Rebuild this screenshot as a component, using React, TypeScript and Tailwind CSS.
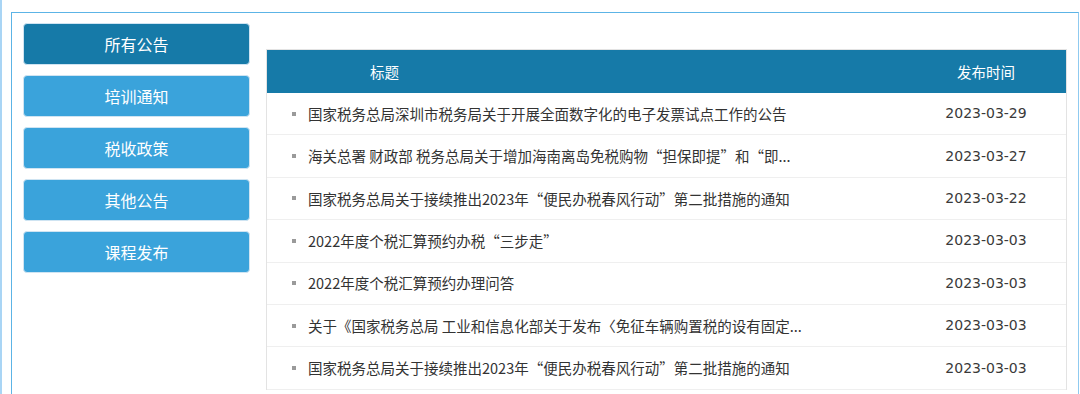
import { useState } from 'react';

const categories = ['所有公告', '培训通知', '税收政策', '其他公告', '课程发布'];

const notices = [
  { title: '国家税务总局深圳市税务局关于开展全面数字化的电子发票试点工作的公告', date: '2023-03-29' },
  { title: '海关总署 财政部 税务总局关于增加海南离岛免税购物“担保即提”和“即...', date: '2023-03-27' },
  { title: '国家税务总局关于接续推出2023年“便民办税春风行动”第二批措施的通知', date: '2023-03-22' },
  { title: '2022年度个税汇算预约办税“三步走”', date: '2023-03-03' },
  { title: '2022年度个税汇算预约办理问答', date: '2023-03-03' },
  { title: '关于《国家税务总局 工业和信息化部关于发布〈免征车辆购置税的设有固定...', date: '2023-03-03' },
  { title: '国家税务总局关于接续推出2023年“便民办税春风行动”第二批措施的通知', date: '2023-03-03' },
];

const App = () => {
  const [active, setActive] = useState(0);

  return (
    <div
      className="min-h-[394px] bg-white border-l-2 border-[#a9d5f5] pl-[9px] pt-[12px] pr-[1px]"
      style={{ fontFamily: '"Noto Sans CJK SC", "Noto Sans", sans-serif' }}
    >
      <div className="h-[400px] border border-b-0 border-[#5cb4e6] border-r-[#8fcaf0] flex items-start pl-[11px] pr-[11px] pt-[10px] gap-[16px]">
        {/* left menu */}
        <div className="w-[227px] shrink-0 flex flex-col gap-[10px]">
          {categories.map((name, i) => (
            <button
              key={name}
              onClick={() => setActive(i)}
              className={
                'h-[42px] w-full rounded-[4px] border border-[#cfe4f2] text-white text-[16px] leading-none ' +
                (active === i ? 'bg-[#167aa8]' : 'bg-[#3aa3db]')
              }
            >
              {name}
            </button>
          ))}
        </div>

        {/* notice table */}
        <div className="flex-1 mt-[26px] border border-[#e3e3e3] border-b-0">
          <div className="h-[43px] bg-[#167aa8] flex items-center text-white text-[14.5px]">
            <div className="flex-1 pl-[103px]">标题</div>
            <div className="w-[160px] text-center">发布时间</div>
          </div>
          {notices.map((n, i) => (
            <div key={i} className="h-[42.4px] flex items-center border-b border-[#efefef] text-[14.5px] text-[#333]">
              <div className="flex-1 flex items-center pl-[25px] min-w-0">
                <span className="w-[4px] h-[4px] bg-[#9a9a9a] mr-[12px] shrink-0" />
                <span className="whitespace-nowrap">{n.title}</span>
              </div>
              <div
                className="w-[160px] text-center text-[14px] text-[#3a3a3a]"
                style={{ fontFamily: '"DejaVu Sans", sans-serif' }}
              >
                {n.date}
              </div>
            </div>
          ))}
        </div>
      </div>
    </div>
  );
};

export default App;
